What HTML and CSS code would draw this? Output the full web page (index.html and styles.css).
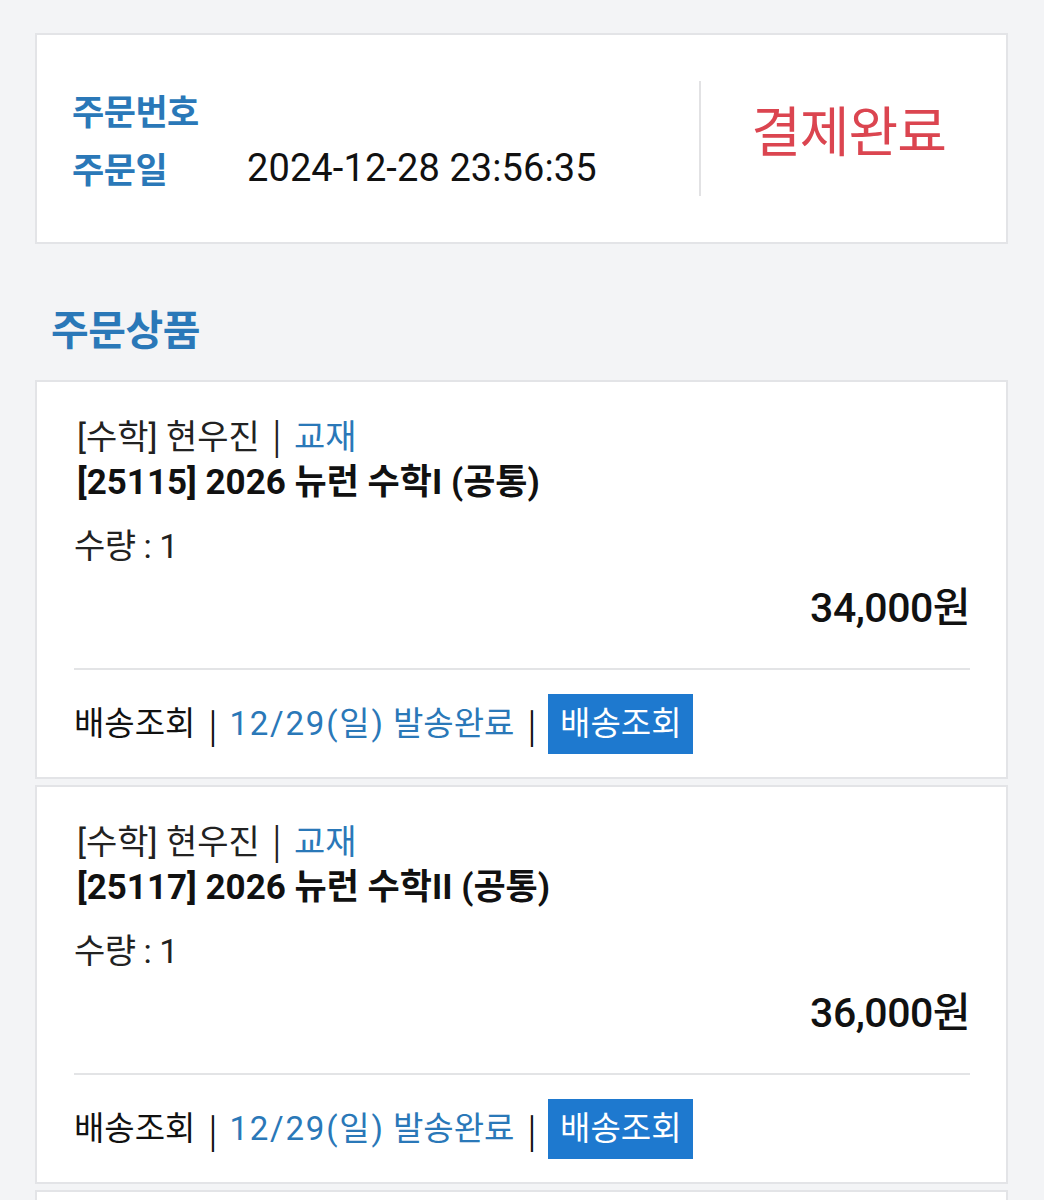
FILE: index.html
```html
<!DOCTYPE html>
<html lang="ko">
<head>
<meta charset="utf-8">
<link rel="stylesheet" href="styles.css">
</head>
<body>
<div class="page">
  <section class="card summary">
    <div class="summary-info">
      <div class="info-row"><span class="info-label">주문번호</span><span class="info-value"></span></div>
      <div class="info-row"><span class="info-label">주문일</span><span class="info-value">2024-12-28 23:56:35</span></div>
    </div>
    <div class="summary-divider"></div>
    <div class="summary-status">결제완료</div>
  </section>

  <h2 class="section-title">주문상품</h2>

  <section class="card item">
    <div class="item-meta">[수학] 현우진 <span class="sep">|</span> <span class="blue">교재</span></div>
    <div class="item-name">[25115] 2026 뉴런 수학I (공통)</div>
    <div class="item-qty">수량 : 1</div>
    <div class="item-price">34,000원</div>
    <div class="item-rule"></div>
    <div class="item-ship">
      <span>배송조회</span><span class="bar">|</span><span class="blue"><span class="ship-date">12/29(일)</span> 발송완료</span><span class="bar">|</span><span class="ship-btn">배송조회</span>
    </div>
  </section>

  <section class="card item">
    <div class="item-meta">[수학] 현우진 <span class="sep">|</span> <span class="blue">교재</span></div>
    <div class="item-name">[25117] 2026 뉴런 수학II (공통)</div>
    <div class="item-qty">수량 : 1</div>
    <div class="item-price">36,000원</div>
    <div class="item-rule"></div>
    <div class="item-ship">
      <span>배송조회</span><span class="bar">|</span><span class="blue"><span class="ship-date">12/29(일)</span> 발송완료</span><span class="bar">|</span><span class="ship-btn">배송조회</span>
    </div>
  </section>

  <section class="card item"></section>
</div>
</body>
</html>
```

FILE: styles.css
```css
html, body {
  margin: 0;
  padding: 0;
  background: #f3f4f6;
}
body {
  font-family: Roboto, "Noto Sans CJK KR", sans-serif;
  color: #111;
}
.page {
  padding: 33px 36px 0 35px;
}
.card {
  background: #fff;
  border: 2px solid #e3e4e7;
  box-sizing: border-box;
}
.summary {
  height: 211px;
  display: flex;
  align-items: center;
}
.summary-info {
  flex: 1;
  padding-left: 35px;
}
.info-row {
  display: flex;
  align-items: center;
  height: 58px;
}
.info-label {
  width: 175px;
  font-size: 35px;
  font-weight: 700;
  color: #2a78b8;
  letter-spacing: -0.5px;
}
.info-value {
  font-size: 38px;
  letter-spacing: 0.1px;
  color: #111;
}
.summary-divider {
  width: 2px;
  height: 115px;
  background: #e2e2e4;
}
.summary-status {
  width: 305px;
  padding: 0 10px 20px 0;
  box-sizing: border-box;
  text-align: center;
  font-size: 54px;
  color: #db4550;
  letter-spacing: -1px;
}
.section-title {
  margin: 62px 0 24px 16px;
  font-size: 41px;
  line-height: 50px;
  font-weight: 700;
  color: #2a78b8;
  letter-spacing: -0.5px;
}
.item {
  padding: 32px 36px 23px 37px;
  margin-bottom: 6px;
  font-size: 34px;
  line-height: 46px;
  letter-spacing: -0.5px;
  min-height: 399px;
}
.item-meta {
  padding-left: 3px;
  height: 46px;
  letter-spacing: 0;
  color: #222;
}
.sep,
.bar {
  font-family: "Noto Sans CJK KR", sans-serif;
  line-height: 1;
}
.sep {
  margin: 0 4px;
  color: #222;
}
.blue {
  color: #2a78b8;
}
.item-name {
  padding-left: 3px;
  font-size: 35px;
  font-weight: 700;
  letter-spacing: 0;
  color: #111;
}
.item-qty {
  margin-top: 17px;
  color: #222;
}
.item-price {
  margin-top: 16px;
  text-align: right;
  font-size: 41px;
  font-weight: 500;
  color: #111;
}
.item-rule {
  margin-top: 37px;
  height: 2px;
  background: #e3e4e6;
}
.item-ship {
  margin-top: 24px;
  display: flex;
  align-items: center;
  height: 60px;
  font-size: 33px;
  letter-spacing: 0;
  color: #111;
}
.ship-date {
  letter-spacing: 1.8px;
}
.bar {
  margin: 0 12px 0 13px;
  color: #111;
}
.ship-btn {
  display: inline-flex;
  align-items: center;
  justify-content: center;
  width: 145px;
  height: 60px;
  background: #1e79cf;
  color: #fff;
}
```
